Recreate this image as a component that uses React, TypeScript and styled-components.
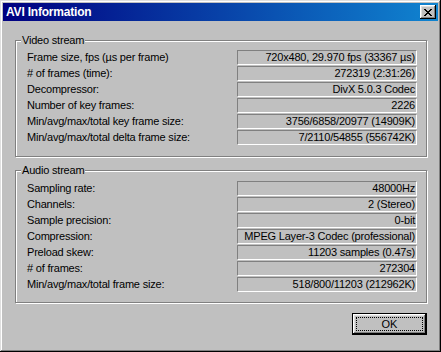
import React from 'react';
import styled, { createGlobalStyle } from 'styled-components';

const GlobalStyle = createGlobalStyle`
  html, body {
    margin: 0;
    padding: 0;
    background: #c0c0c0;
  }
  body {
    font-family: 'Liberation Sans', Arial, sans-serif;
    font-size: 11px;
    color: #000;
  }
`;

interface Row {
  label: string;
  value: string;
}

const videoRows: Row[] = [
  { label: 'Frame size, fps (µs per frame)', value: '720x480, 29.970 fps (33367 µs)' },
  { label: '# of frames (time):', value: '272319 (2:31:26)' },
  { label: 'Decompressor:', value: 'DivX 5.0.3 Codec' },
  { label: 'Number of key frames:', value: '2226' },
  { label: 'Min/avg/max/total key frame size:', value: '3756/6858/20977 (14909K)' },
  { label: 'Min/avg/max/total delta frame size:', value: '7/2110/54855 (556742K)' }
];

const audioRows: Row[] = [
  { label: 'Sampling rate:', value: '48000Hz' },
  { label: 'Channels:', value: '2 (Stereo)' },
  { label: 'Sample precision:', value: '0-bit' },
  { label: 'Compression:', value: 'MPEG Layer-3 Codec (professional)' },
  { label: 'Preload skew:', value: '11203 samples (0.47s)' },
  { label: '# of frames:', value: '272304' },
  { label: 'Min/avg/max/total frame size:', value: '518/800/11203 (212962K)' }
];

const StreamGroup = ({ title, rows, first }: { title: string; rows: Row[]; first?: boolean }) => (
  <Group $first={first}>
    <Legend>{title}</Legend>
    <Rows>
      {rows.map((r) => (
        <React.Fragment key={r.label}>
          <Label>{r.label}</Label>
          <Value>{r.value}</Value>
        </React.Fragment>
      ))}
    </Rows>
  </Group>
);

const App = () => {
  return (
    <>
      <GlobalStyle />
      <Window>
        <TitleBar>
          <Title>AVI Information</Title>
          <CloseButton>
            <svg width="8" height="7" viewBox="0 0 8 7">
              <path d="M0 0h2v1h1v1h2V1h1V0h2v1H7v1H6v1H5v1h1v1h1v1h1v1H6V6H5V5H3v1H2v1H0V6h1V5h1V4h1V3H2V2H1V1H0z" fill="#000" />
            </svg>
          </CloseButton>
        </TitleBar>
        <Body>
          <StreamGroup title="Video stream" rows={videoRows} first />
          <StreamGroup title="Audio stream" rows={audioRows} />
          <Footer>
            <OkButton>
              <Focus>OK</Focus>
            </OkButton>
          </Footer>
        </Body>
      </Window>
    </>
  );
};

export default App;

const Window = styled.div`
  width: 441px;
  height: 352px;
  box-sizing: border-box;
  padding: 3px;
  background: #c0c0c0;
  box-shadow: inset -1px -1px 0 #000, inset 1px 1px 0 #dfdfdf, inset -2px -2px 0 #808080,
    inset 2px 2px 0 #fff;
  display: flex;
  flex-direction: column;
`;
const TitleBar = styled.div`
  height: 18px;
  display: flex;
  align-items: center;
  justify-content: space-between;
  padding: 0 2px 0 3px;
  background: linear-gradient(90deg, #000080, #1084d0);
`;
const Title = styled.div`
  color: #fff;
  font-weight: bold;
  font-size: 12px;
  letter-spacing: -0.2px;
`;
const CloseButton = styled.div`
  width: 16px;
  height: 14px;
  box-sizing: border-box;
  background: #c0c0c0;
  box-shadow: inset -1px -1px 0 #000, inset 1px 1px 0 #fff, inset -2px -2px 0 #808080,
    inset 2px 2px 0 #dfdfdf;
  display: flex;
  align-items: center;
  justify-content: center;
  svg {
    display: block;
    margin-left: -1px;
  }
`;
const Body = styled.div`
  padding: 0 11px 0 12px;
  display: flex;
  flex-direction: column;
`;
const Group = styled.div<{ $first?: boolean }>`
  position: relative;
  margin-top: ${(p) => (p.$first ? '19px' : '13px')};
  border: 1px solid #808080;
  box-shadow: inset 1px 1px 0 #fff, 1px 1px 0 #fff;
  padding: ${(p) => (p.$first ? '9px 9px 11px 11px' : '10px 9px 10px 11px')};
`;
const Legend = styled.div`
  position: absolute;
  top: -8px;
  left: 5px;
  padding: 0 1px;
  background: #c0c0c0;
  line-height: 15px;
  letter-spacing: -0.2px;
`;
const Rows = styled.div`
  display: grid;
  grid-template-columns: 1fr 180px;
  grid-auto-rows: 15px;
  row-gap: 1px;
`;
const Label = styled.div`
  line-height: 15px;
  letter-spacing: -0.2px;
  white-space: nowrap;
`;
const Value = styled.div`
  box-sizing: border-box;
  border-top: 1px solid #808080;
  border-left: 1px solid #808080;
  border-bottom: 1px solid #fff;
  border-right: 1px solid #fff;
  text-align: right;
  padding-right: 1px;
  line-height: 13px;
  letter-spacing: -0.2px;
  white-space: nowrap;
  overflow: hidden;
`;
const Footer = styled.div`
  display: flex;
  justify-content: flex-end;
  margin-top: 10px;
`;
const OkButton = styled.div`
  width: 75px;
  height: 22px;
  box-sizing: border-box;
  border: 1px solid #000;
  background: #c0c0c0;
  box-shadow: inset -1px -1px 0 #000, inset 1px 1px 0 #fff, inset -2px -2px 0 #808080,
    inset 2px 2px 0 #dfdfdf;
  padding: 3px;
  display: flex;
`;
const Focus = styled.div`
  flex: 1;
  border: 1px dotted #000;
  display: flex;
  align-items: center;
  justify-content: center;
  font-size: 11px;
`;
